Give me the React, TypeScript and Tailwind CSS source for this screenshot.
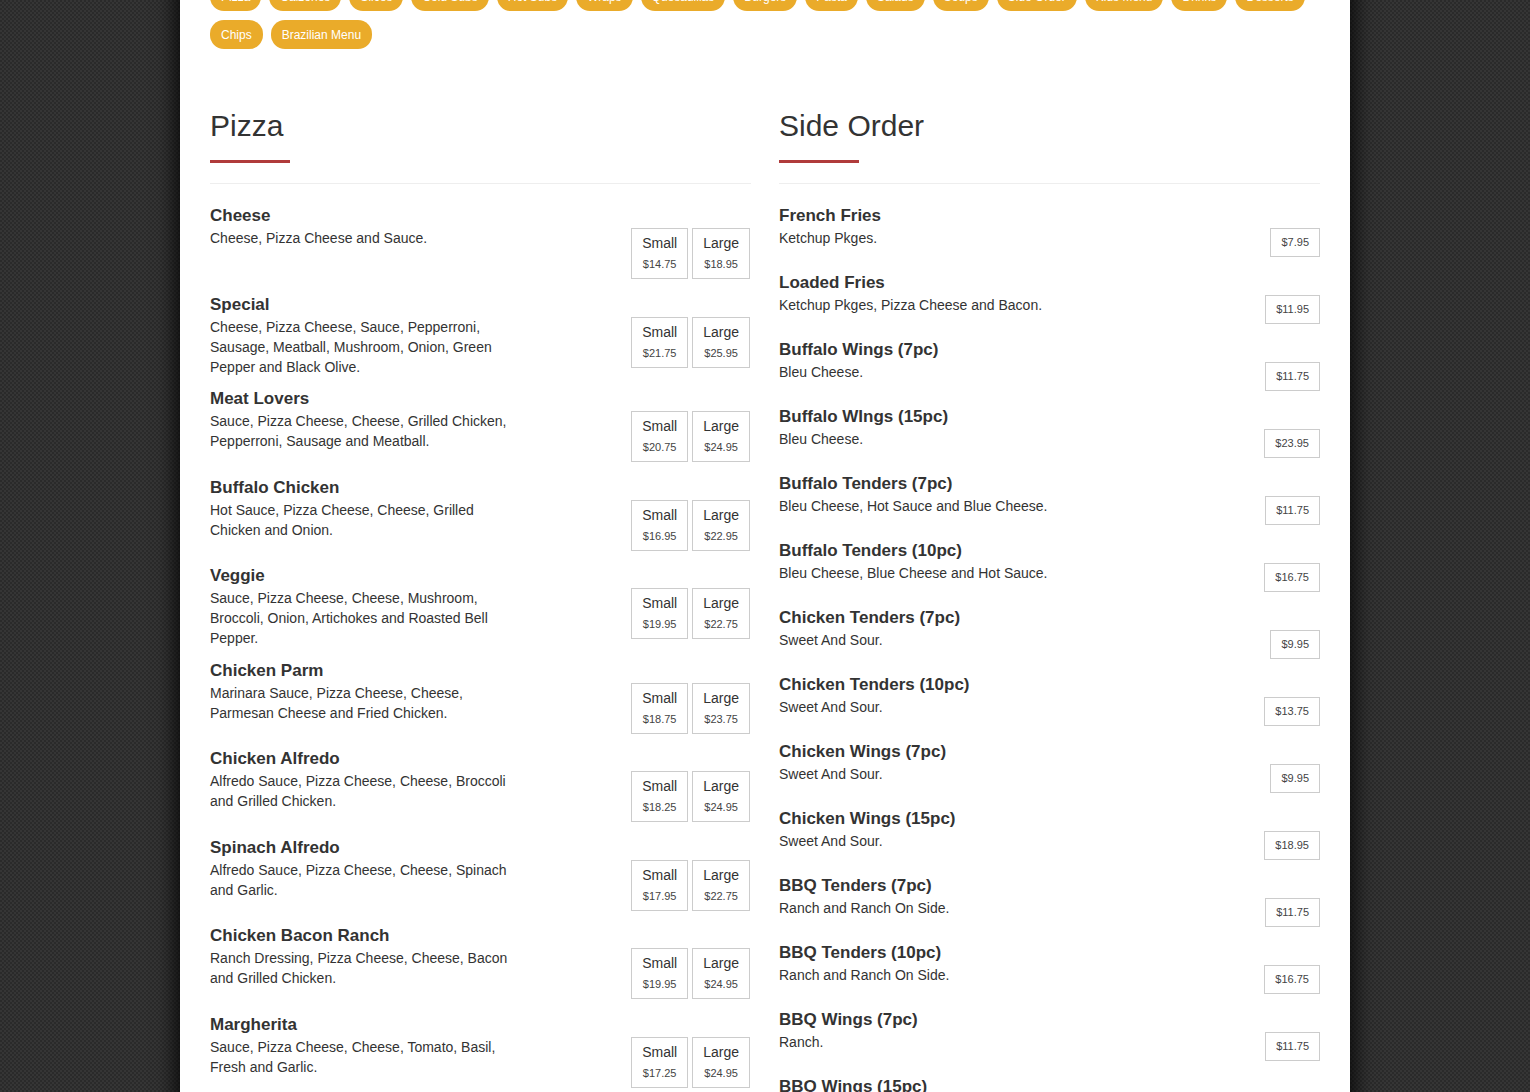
import React from "react";

const pills = [
  "Pizza","Calzones","Slices","Cold Subs","Hot Subs","Wraps","Quesadillas","Burgers","Pasta","Salads","Soups","Side Order","Kids Menu","Drinks","Desserts","Chips","Brazilian Menu",
];

type Pz = { name: string; desc: string; s: string; l: string };
const pizzas: Pz[] = [
  { name: "Cheese", desc: "Cheese, Pizza Cheese and Sauce.", s: "$14.75", l: "$18.95" },
  { name: "Special", desc: "Cheese, Pizza Cheese, Sauce, Pepperroni, Sausage, Meatball, Mushroom, Onion, Green Pepper and Black Olive.", s: "$21.75", l: "$25.95" },
  { name: "Meat Lovers", desc: "Sauce, Pizza Cheese, Cheese, Grilled Chicken, Pepperroni, Sausage and Meatball.", s: "$20.75", l: "$24.95" },
  { name: "Buffalo Chicken", desc: "Hot Sauce, Pizza Cheese, Cheese, Grilled Chicken and Onion.", s: "$16.95", l: "$22.95" },
  { name: "Veggie", desc: "Sauce, Pizza Cheese, Cheese, Mushroom, Broccoli, Onion, Artichokes and Roasted Bell Pepper.", s: "$19.95", l: "$22.75" },
  { name: "Chicken Parm", desc: "Marinara Sauce, Pizza Cheese, Cheese, Parmesan Cheese and Fried Chicken.", s: "$18.75", l: "$23.75" },
  { name: "Chicken Alfredo", desc: "Alfredo Sauce, Pizza Cheese, Cheese, Broccoli and Grilled Chicken.", s: "$18.25", l: "$24.95" },
  { name: "Spinach Alfredo", desc: "Alfredo Sauce, Pizza Cheese, Cheese, Spinach and Garlic.", s: "$17.95", l: "$22.75" },
  { name: "Chicken Bacon Ranch", desc: "Ranch Dressing, Pizza Cheese, Cheese, Bacon and Grilled Chicken.", s: "$19.95", l: "$24.95" },
  { name: "Margherita", desc: "Sauce, Pizza Cheese, Cheese, Tomato, Basil, Fresh and Garlic.", s: "$17.25", l: "$24.95" },
];

type Sd = { name: string; desc: string; p: string };
const sides: Sd[] = [
  { name: "French Fries", desc: "Ketchup Pkges.", p: "$7.95" },
  { name: "Loaded Fries", desc: "Ketchup Pkges, Pizza Cheese and Bacon.", p: "$11.95" },
  { name: "Buffalo Wings (7pc)", desc: "Bleu Cheese.", p: "$11.75" },
  { name: "Buffalo WIngs (15pc)", desc: "Bleu Cheese.", p: "$23.95" },
  { name: "Buffalo Tenders (7pc)", desc: "Bleu Cheese, Hot Sauce and Blue Cheese.", p: "$11.75" },
  { name: "Buffalo Tenders (10pc)", desc: "Bleu Cheese, Blue Cheese and Hot Sauce.", p: "$16.75" },
  { name: "Chicken Tenders (7pc)", desc: "Sweet And Sour.", p: "$9.95" },
  { name: "Chicken Tenders (10pc)", desc: "Sweet And Sour.", p: "$13.75" },
  { name: "Chicken Wings (7pc)", desc: "Sweet And Sour.", p: "$9.95" },
  { name: "Chicken Wings (15pc)", desc: "Sweet And Sour.", p: "$18.95" },
  { name: "BBQ Tenders (7pc)", desc: "Ranch and Ranch On Side.", p: "$11.75" },
  { name: "BBQ Tenders (10pc)", desc: "Ranch and Ranch On Side.", p: "$16.75" },
  { name: "BBQ Wings (7pc)", desc: "Ranch.", p: "$11.75" },
  { name: "BBQ Wings (15pc)", desc: "Ranch.", p: "$18.95" },
];

function Heading({ title }: { title: string }) {
  return (
    <div>
      <h2 className="text-[30px] leading-[32px] font-normal text-[#333]">{title}</h2>
      <div className="mt-[18px] h-[3px] w-[80px] bg-[#b03b3b]" />
      <div className="mt-[20px] h-px w-full bg-[#eeeeee]" />
    </div>
  );
}

function SizeBox({ label, price }: { label: string; price: string }) {
  return (
    <div className="border border-[#cccccc] px-[10px] pt-[4px] pb-[6px] text-center">
      <div className="text-[14px] leading-[20px] text-[#333]">{label}</div>
      <div className="mt-[3px] text-[11px] leading-[16px] text-[#444]">{price}</div>
    </div>
  );
}

function PizzaItem({ it }: { it: Pz }) {
  return (
    <div className="flex justify-between pb-[9.5px]">
      <div className="w-[310px] pt-px">
        <div className="text-[17px] leading-[24px] font-bold text-[#333]">{it.name}</div>
        <div className="text-[14px] leading-[20px] text-[#333]">{it.desc}</div>
      </div>
      <div className="mt-[25px] mb-[3px] mr-px flex gap-[4px] self-start">
        <SizeBox label="Small" price={it.s} />
        <SizeBox label="Large" price={it.l} />
      </div>
    </div>
  );
}

function SideItem({ it }: { it: Sd }) {
  return (
    <div className="flex justify-between pb-[10px]">
      <div className="w-[400px] pt-px">
        <div className="text-[17px] leading-[24px] font-bold text-[#333]">{it.name}</div>
        <div className="text-[14px] leading-[20px] text-[#333]">{it.desc}</div>
      </div>
      <div className="mt-[25px] mb-[3px] self-start border border-[#cccccc] px-[10px] py-[5px] text-[11px] leading-[17px] text-[#444]">
        {it.p}
      </div>
    </div>
  );
}

export default function App() {
  return (
    <div className="min-h-screen overflow-hidden bg-[#2f2f2f] bg-[image:repeating-conic-gradient(#353535_0%_25%,#2a2a2a_0%_50%)] bg-[length:4px_4px] font-['Liberation_Sans',Arial,sans-serif]">
      <div className="mx-auto w-[1170px] bg-white px-[30px] pb-[40px] shadow-[0_0_18px_6px_rgba(0,0,0,0.75)]">
        <div className="-mt-[18px] flex flex-wrap gap-x-[8px] gap-y-[9px] pr-[10px]">
          {pills.map((p) => (
            <span
              key={p}
              className="inline-flex h-[29px] items-center rounded-[14px] bg-[#eaab2a] px-[11px] text-[12px] text-white"
            >
              {p}
            </span>
          ))}
        </div>
        <div className="mt-[61px] grid grid-cols-2 gap-x-[28px]">
          <div>
            <Heading title="Pizza" />
            <div className="mt-[19px]">
              {pizzas.map((it) => (
                <PizzaItem key={it.name} it={it} />
              ))}
            </div>
          </div>
          <div>
            <Heading title="Side Order" />
            <div className="mt-[19px]">
              {sides.map((it) => (
                <SideItem key={it.name} it={it} />
              ))}
            </div>
          </div>
        </div>
      </div>
    </div>
  );
}
